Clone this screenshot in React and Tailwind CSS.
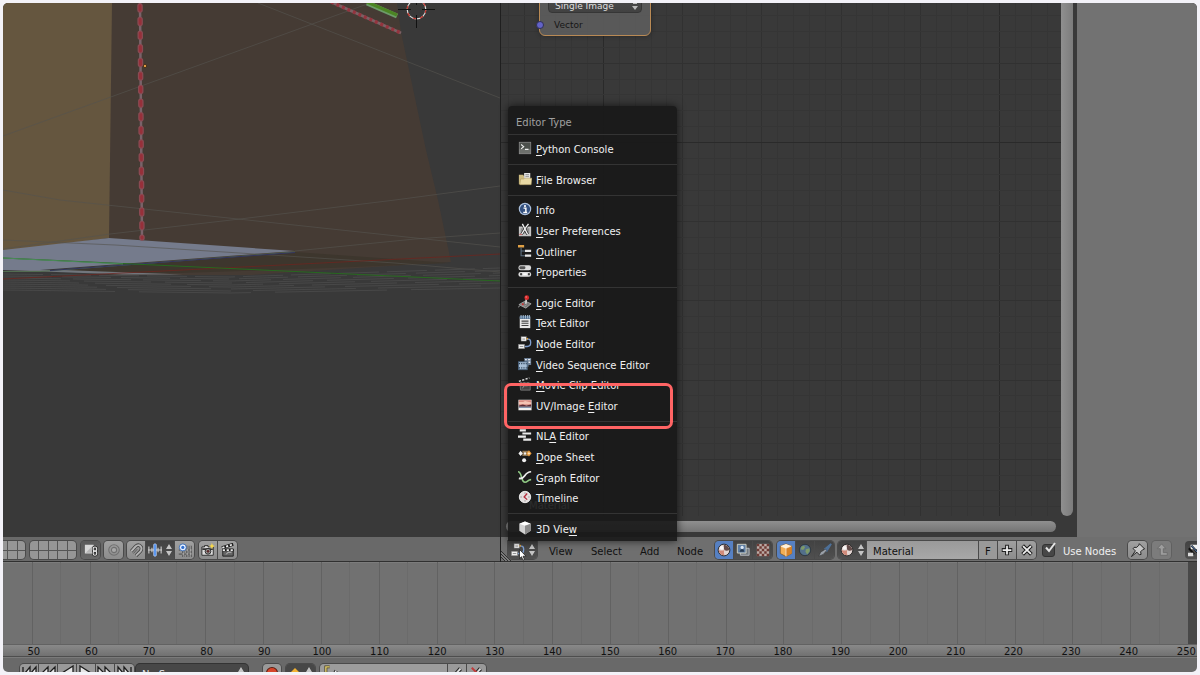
import { useState } from 'react';
import clsx from 'clsx';

const svgProps = { viewBox: '0 0 16 16', className: 'w-[14px] h-[14px] shrink-0', 'aria-hidden': true };

const icons = {
  console: (
    <svg {...svgProps}>
      <rect x="1.5" y="1.5" width="13" height="13" fill="#6d706c" stroke="#8a8a8a" />
      <rect x="2" y="2" width="12" height="7" fill="#4c504c" />
      <path d="M3.5 4l3 2.5-3 2.5M8 9.500h4" fill="none" stroke="#eee" strokeWidth="1.3" />
    </svg>
  ),
  files: (
    <svg {...svgProps}>
      <path d="M1 3h5l1 2v9H1z" fill="#cdbb80" />
      <path d="M7 1h7v8H7z" fill="#e6e6e6" />
      <path d="M8.500 3h4M8.500 5h4" stroke="#888" />
      <path d="M3 8h4l1-1h8l-1 7.500H2z" fill="#e8d9a5" stroke="#a8965c" strokeWidth=".6" />
    </svg>
  ),
  info: (
    <svg {...svgProps}>
      <circle cx="8" cy="8" r="6.500" fill="#33507f" stroke="#a9bedb" strokeWidth="1.300" />
      <circle cx="8" cy="4.700" r="1.200" fill="#fff" />
      <path d="M6.300 7H9v4.500M6 12h4.500" fill="none" stroke="#fff" strokeWidth="1.700" />
    </svg>
  ),
  prefs: (
    <svg {...svgProps}>
      <path d="M1 4h14v11H1z" fill="#c4c4c4" />
      <path d="M3 6h10v6H3z" fill="#8c8c8c" />
      <path d="M5 1l2 4 4 8M12 1L9 5l-5 8" fill="none" stroke="#222" strokeWidth="3" />
      <path d="M5 1l2 4 4 8M12 1L9 5l-5 8" fill="none" stroke="#eee" strokeWidth="1.500" />
      <path d="M1.500 13h3" stroke="#c55" />
    </svg>
  ),
  outliner: (
    <svg {...svgProps}>
      <path d="M0 1h7v3H0z" fill="#e0a045" />
      <path d="M3.500 4v9.500H8M3.500 8H8" fill="none" stroke="#5e7183" strokeWidth="1.200" />
      <path d="M8 6.500h7v2.500H8zM8 12h7v2.500H8z" fill="#e6e6e6" />
    </svg>
  ),
  properties: (
    <svg {...svgProps}>
      <rect x=".5" y="1.500" width="14.500" height="5.500" rx="2.500" fill="#ddd" />
      <rect x="1.500" y="2.700" width="7" height="3.200" rx="1.500" fill="#555" />
      <rect x=".5" y="9" width="14.500" height="5.500" rx="2.500" fill="#ddd" />
      <circle cx="3.500" cy="11.700" r="1.300" fill="#444" />
      <circle cx="12.500" cy="11.700" r="1.300" fill="#444" />
      <path d="M6 11.700h4" stroke="#fff" strokeWidth="2" />
    </svg>
  ),
  logic: (
    <svg {...svgProps}>
      <path d="M1 11l7-4 7 3-6 5z" fill="#777" stroke="#bbb" strokeWidth=".8" />
      <path d="M0 14l4-3 3 2 3-2" fill="none" stroke="#999" />
      <path d="M9.500 4L9 10" stroke="#ddd" strokeWidth="1.800" />
      <circle cx="10" cy="3" r="2.700" fill="#d92b2b" />
      <circle cx="9.300" cy="2.300" r=".8" fill="#f99" />
      <circle cx="5.500" cy="10.500" r="1.200" fill="#c33" />
    </svg>
  ),
  text: (
    <svg {...svgProps}>
      <rect x="2" y="2" width="12" height="13" fill="#e8e8e8" />
      <path d="M2 1h12v3.500H2z" fill="#4b6a8c" />
      <path d="M3.500 0v4M6 0v4M8.500 0v4M11 0v4M13 0v4" stroke="#b6c9dc" />
      <path d="M4 7h8M4 9.500h8M4 12h8" stroke="#444" strokeWidth="1.200" />
    </svg>
  ),
  node: (
    <svg {...svgProps}>
      <path d="M9 3.500h3c2.500 0 2.500 2 2.500 4s0 4.500-4 4.500H8" fill="none" stroke="#7f9fd0" strokeWidth="1.500" />
      <rect x="3.500" y=".8" width="6" height="5" fill="#f0f0f0" stroke="#777" strokeWidth=".5" />
      <path d="M5 3.500h3" stroke="#888" />
      <rect x=".5" y="9.500" width="7" height="5" fill="#f0f0f0" stroke="#777" strokeWidth=".5" />
      <path d="M2 12h4" stroke="#888" />
      <circle cx="10.500" cy="3" r="1" fill="#e3a33c" />
    </svg>
  ),
  sequence: (
    <svg {...svgProps}>
      <path d="M7 1h8v8h-3v2H8z" fill="#6c7f96" />
      <path d="M8 3h2M11.500 3H14M12 6h2" stroke="#e5ebf2" strokeWidth="1.500" />
      <rect x=".5" y="5.500" width="10" height="9" fill="#a7bed6" stroke="#47607c" />
      <path d="M1 7.500h9M1 12.500h9" stroke="#2f4358" strokeWidth="1.400" strokeDasharray="1.300 1.300" />
    </svg>
  ),
  clip: (
    <svg {...svgProps}>
      <path d="M2 7h12v8H3z" fill="#444" stroke="#888" strokeWidth=".8" />
      <path d="M1 5l12-4" stroke="#ddd" strokeWidth="1.600" strokeDasharray="2.500 1.500" />
      <path d="M2 7.500h12" stroke="#ddd" strokeWidth="1.800" strokeDasharray="2.500 1.500" />
      <path d="M5 13l2-3h4" fill="none" stroke="#999" />
    </svg>
  ),
  image: (
    <svg {...svgProps}>
      <rect x=".5" y="2" width="15" height="12" fill="#f0eeee" />
      <rect x="1" y="2.500" width="14" height="6" fill="#d98a80" />
      <path d="M1 4.500h5l2-1 7 1.500V7H1z" fill="#f3c3b4" />
      <path d="M1 8.500l4.500-1 4 1 5.500-1v2.500H1z" fill="#5b2a33" />
      <path d="M1 10h14v1.200H1z" fill="#6a7d9b" />
    </svg>
  ),
  nla: (
    <svg {...svgProps}>
      <path d="M2 1.500h7v2.500H2zM5 5h10v2.500H5zM0 8.500h9v2.500H0zM6 12h9v2.500H6z" fill="#ececec" />
    </svg>
  ),
  dope: (
    <svg {...svgProps}>
      <path d="M5 2h7v6H5z" fill="#8f7550" />
      <path d="M3 2l2.500 3L3 8 .5 5z" fill="#f0f0f0" />
      <path d="M8 3l1.500 2L8 7 6.500 5z" fill="#f0f0f0" />
      <path d="M12.500 1.500L15.500 5l-3 3.500L9.500 5z" fill="#e99a3c" />
      <path d="M12.500 3.500L14 5l-1.500 1.500L11 5z" fill="#fbe0b3" />
      <circle cx="7" cy="12.800" r="2.300" fill="#f0f0f0" />
    </svg>
  ),
  graph: (
    <svg {...svgProps}>
      <path d="M0 2c5 0 3 12 8 12 3 0 3-3 7-3" fill="none" stroke="#8fc984" strokeWidth="1.800" />
      <path d="M1 9.500c8 2 5-7 14-7.500" fill="none" stroke="#eee" strokeWidth="2" />
    </svg>
  ),
  timeline: (
    <svg {...svgProps}>
      <circle cx="8" cy="8" r="6.500" fill="#e4dfdf" stroke="#f6f6f6" />
      <path d="M8 3v1M8 12v1M3 8h1M12 8h1" stroke="#555" />
      <path d="M10.500 4L7 8l3.500 3" fill="none" stroke="#b22a3a" strokeWidth="1.500" />
    </svg>
  ),
  cube: (
    <svg {...svgProps}>
      <path d="M8 .500l6.500 2.500V11L8 15.500 1.500 11V3z" fill="#d2d2d2" />
      <path d="M8 .500l6.500 2.500L8 5.500 1.500 3z" fill="#fff" />
      <path d="M8 5.500L14.500 3V11L8 15.500z" fill="#8b8b8b" />
    </svg>
  ),
  orangeCube: (
    <svg {...svgProps}>
      <path d="M8 1l6.500 2.500V12L8 15.500 1.500 12V3.500z" fill="#f3ae55" stroke="#7a4a10" strokeWidth=".7" />
      <path d="M8 1l6 2.500L8 6 2 3.500z" fill="#fff0d8" />
      <path d="M8 6l6.500-2.500V12L8 15.500z" fill="#d88125" />
      <path d="M8 6v9.500M8 6l6-2.500M8 6L2 3.500" stroke="#fff" strokeWidth=".7" fill="none" />
    </svg>
  ),
  ball: (
    <svg {...svgProps}>
      <circle cx="8" cy="8" r="6.700" fill="#e2d5d2" stroke="#1d1d1d" />
      <path d="M8 2a6 6 0 0 1 6 6c-2 1-4 1-5.500 0C7.500 6 7.500 4 8 2z" fill="#634b49" />
      <path d="M8.500 8C7.500 10 8 12 8.500 14A6 6 0 0 1 2 8c2 .8 4.500.8 6.500 0z" fill="#d08a7a" />
      <circle cx="5.500" cy="5.500" r="2.200" fill="#fff" opacity=".8" />
    </svg>
  ),
  layersImg: (
    <svg {...svgProps}>
      <path d="M5 6h10v8H5z" fill="#737a80" stroke="#bfc4c9" />
      <path d="M1.500 1.500h10v10h-10z" fill="#5f7ea3" stroke="#d8d8c8" />
      <circle cx="7" cy="5" r="1.800" fill="#dbe8f6" />
      <path d="M4 10l1.500-3h3l1 3z" fill="#26394f" />
    </svg>
  ),
  checker: (
    <svg {...svgProps}>
      <rect x="1" y="1" width="14" height="14" fill="#bbaaa4" />
      <path d="M1 2.400h14M1 8h14M1 13.600h14" stroke="#6e3a34" strokeWidth="2.800" strokeDasharray="2.800 2.800" />
      <path d="M3.800 5.200H15M3.800 10.800H15" stroke="#6e3a34" strokeWidth="2.800" strokeDasharray="2.800 2.800" />
    </svg>
  ),
  world: (
    <svg {...svgProps}>
      <circle cx="8" cy="8" r="6.500" fill="#53708a" stroke="#2a333b" />
      <path d="M4 4l3-1 1 2-2 3-3-1zM9 7l4-1 .5 3-3 4-2-3z" fill="#7d9a68" />
    </svg>
  ),
  brush: (
    <svg {...svgProps}>
      <path d="M15 1L8 7l2 2z" fill="#4d7099" stroke="#4d7099" strokeWidth="2" />
      <path d="M8.500 7L3 10.500 1 15l5-2 4-4.500z" fill="#9aa0a8" stroke="#333" strokeWidth=".6" />
    </svg>
  ),
  link: (
    <svg {...svgProps}>
      <path d="M1 2h10v10H1z" fill="#d8d8d8" />
      <path d="M2 11L10 3v8z" fill="#b5b5b5" />
      <rect x="10.500" y="4.500" width="4" height="5" rx="2" fill="none" stroke="#222" strokeWidth="2.600" />
      <rect x="10.500" y="9" width="4" height="5" rx="2" fill="none" stroke="#222" strokeWidth="2.600" />
      <rect x="10.500" y="4.500" width="4" height="5" rx="2" fill="none" stroke="#eee" strokeWidth="1.200" />
      <rect x="10.500" y="9" width="4" height="5" rx="2" fill="none" stroke="#eee" strokeWidth="1.200" />
    </svg>
  ),
  proportional: (
    <svg {...svgProps}>
      <circle cx="8" cy="8" r="6" fill="none" stroke="#707070" strokeWidth="1.200" />
      <circle cx="8" cy="8" r="3" fill="#a8a8a8" stroke="#707070" strokeWidth="1.200" />
    </svg>
  ),
  magnet: (
    <svg {...svgProps}>
      <path d="M2.500 9.500l5-5.500c4-4 9 1 5.500 5.500l-5 5" fill="none" stroke="#444" strokeWidth="4" />
      <path d="M2.500 9.500l5-5.500c4-4 9 1 5.500 5.500l-5 5" fill="none" stroke="#b4b4b4" strokeWidth="2.200" />
      <path d="M5 12l4.500-5" stroke="#555" />
    </svg>
  ),
  increment: (
    <svg {...svgProps}>
      <path d="M0 8h16M1 4v8M4.500 5.500v5M11.500 5.500v5M15 4v8" stroke="#d5d5d5" strokeWidth="1.200" />
      <rect x="6.500" y="1" width="3" height="14" rx="1" fill="#4d8ff0" stroke="#dbe8ff" strokeWidth=".7" />
    </svg>
  ),
  snapGrid: (
    <svg {...svgProps}>
      <path d="M1 8h15M1 12.500h15M6 5v11M10.500 3v13M14.500 3v13" stroke="#3a3a3a" strokeWidth="2.400" />
      <path d="M1 8h15M1 12.500h15M6 5v11M10.500 3v13M14.500 3v13" stroke="#d0d0d0" strokeWidth=".8" />
      <circle cx="5.500" cy="5" r="4" fill="#e8f0ff" stroke="#3168b5" />
      <circle cx="5.500" cy="5" r="1.800" fill="#2f6fd0" />
    </svg>
  ),
  camera: (
    <svg {...svgProps}>
      <path d="M1 4.500h3V3h4v1.500h6V14H1z" fill="#ddd" stroke="#222" />
      <path d="M1.500 6h12v2h-12z" fill="#333" />
      <circle cx="8" cy="9.500" r="3.300" fill="#999" stroke="#222" />
      <circle cx="8" cy="9.500" r="1.600" fill="#5a2a2a" />
      <path d="M12.500 0l1 2.500 2.500 1-2.500 1-1 2.500-1-2.500-2.500-1 2.500-1z" fill="#f7d84a" />
    </svg>
  ),
  clapper: (
    <svg {...svgProps}>
      <path d="M2 7h12v8H2z" fill="#666" stroke="#1d1d1d" />
      <path d="M1 5.500L14 1.500" stroke="#1d1d1d" strokeWidth="3.500" />
      <path d="M1.500 5.500L14 1.500" stroke="#eee" strokeWidth="2" strokeDasharray="2.500 2" />
      <path d="M1.500 8h13" stroke="#1d1d1d" strokeWidth="3" />
      <path d="M2 8h12" stroke="#eee" strokeWidth="2" strokeDasharray="2.500 2" />
      <path d="M6 13l2-2.500h4" fill="none" stroke="#ccc" />
    </svg>
  ),
  plus: (
    <svg {...svgProps}>
      <path d="M8 2v12M2 8h12" stroke="#222" strokeWidth="4.400" />
      <path d="M8 3v10M3 8h10" stroke="#eee" strokeWidth="2" />
    </svg>
  ),
  cross: (
    <svg {...svgProps}>
      <path d="M3 3l10 10M13 3L3 13" stroke="#222" strokeWidth="4.400" />
      <path d="M3.500 3.500l9 9M12.500 3.500l-9 9" stroke="#eee" strokeWidth="2" />
    </svg>
  ),
  pin: (
    <svg {...svgProps}>
      <path d="M9.500 .800l6 6-2 .7-2.500 2.500.5 3-2 .5-2.700-3L.500 15.500l4.500-6.500L2.500 6.500 3.500 5h3L9 2.500z" fill="#c8c8c8" stroke="#222" strokeWidth="1.100" />
    </svg>
  ),
  parent: (
    <svg {...svgProps}>
      <path d="M7.500 1l5 5.500H9.500V11H14v3H6V6.500H2.500z" fill="#9d9d9d" stroke="#6c6c6c" />
    </svg>
  ),
  snapNode: (
    <svg {...svgProps}>
      <path d="M3 2h13v5H3z" fill="#eee" />
      <path d="M1 6l6 7M4 3l8 9 4-5" fill="none" stroke="#111" strokeWidth="2.200" />
      <path d="M4 3l8 9" stroke="#6d9bd8" />
      <path d="M0 11h6v4H0z" fill="#ddd" />
    </svg>
  ),
};

// null is a divider
const editorTypes = [
  null,
  { label: 'Python Console', key: 0, icon: 'console' },
  null,
  { label: 'File Browser', key: 0, icon: 'files' },
  null,
  { label: 'Info', key: 0, icon: 'info' },
  { label: 'User Preferences', key: 0, icon: 'prefs' },
  { label: 'Outliner', key: 0, icon: 'outliner' },
  { label: 'Properties', key: 1, icon: 'properties' },
  null,
  { label: 'Logic Editor', key: 0, icon: 'logic' },
  { label: 'Text Editor', key: 0, icon: 'text' },
  { label: 'Node Editor', key: 0, icon: 'node' },
  { label: 'Video Sequence Editor', key: 0, icon: 'sequence' },
  { label: 'Movie Clip Editor', key: 0, icon: 'clip' },
  { label: 'UV/Image Editor', key: 9, icon: 'image', marked: true },
  null,
  { label: 'NLA Editor', key: 2, icon: 'nla' },
  { label: 'Dope Sheet', key: 0, icon: 'dope' },
  { label: 'Graph Editor', key: 0, icon: 'graph' },
  { label: 'Timeline', key: -1, icon: 'timeline' },
  null,
  { label: '3D View', key: 6, icon: 'cube' },
];

function UpDown() {
  return (
    <svg viewBox="0 0 6 14" className="w-[6px] h-[14px] shrink-0" aria-hidden="true">
      <path d="M3 1l3 5H0zM3 13l3-5H0z" fill="#c4c4c4" />
    </svg>
  );
}

function IconButton({ icon, label, tone = 'light', wide, className }) {
  return (
    <button
      type="button"
      aria-label={label}
      className={clsx(
        'h-[18px] flex items-center justify-center shrink-0',
        wide ? 'w-[29px] gap-1' : 'w-[19px]',
        tone === 'light' && 'bg-linear-to-b from-[#a0a0a0] to-[#8c8c8c]',
        tone === 'dark' && 'bg-linear-to-b from-[#424242] to-[#505050]',
        tone === 'pressed' && 'bg-linear-to-b from-[#5a5a5a] to-[#686868]',
        tone === 'active' && 'bg-[#5680c2]',
        tone === 'faded' && 'bg-[#7c7c7c]',
        className
      )}
    >
      {icons[icon]}
      {wide && <UpDown />}
    </button>
  );
}

function Group({ children, className }) {
  return (
    <div className={clsx('flex shrink-0 rounded-[4px] overflow-hidden ring-1 ring-[#4a4a4a] divide-x divide-[#4a4a4a]', className)}>
      {children}
    </div>
  );
}

function EditorMenu() {
  return (
    <div className="absolute z-20 bottom-full left-0 w-[169px] rounded-t-[4px] bg-[#191919]/92 shadow-[0_0_9px_rgba(0,0,0,0.65)]">
      <div className="h-[23px] pt-[10px] pl-2 leading-[14px] text-[#a0a0a0]">Editor Type</div>
      <ul className="h-[412px] pb-[2px] flex flex-col" role="menu">
        {editorTypes.map((item, i) =>
          item === null ? (
            <li key={i} role="separator" className="h-[10px] shrink-0 flex items-center">
              <div className="w-full h-px bg-[#343434]" />
            </li>
          ) : (
            <li key={i} role="none" className="relative flex-1 flex">
              <button type="button" role="menuitem" className="w-full pl-[10px] pb-[2px] flex items-center gap-1 text-[#f0f0f0]">
                {icons[item.icon]}
                <span className="pt-[4px] whitespace-pre leading-[14px]">
                  {item.label.slice(0, Math.max(item.key, 0))}
                  {item.key >= 0 && <span className="underline underline-offset-2">{item.label[item.key]}</span>}
                  {item.label.slice(item.key + 1)}
                </span>
              </button>
              {item.marked && (
                <div className="absolute z-10 -left-1 right-1 -top-[13px] -bottom-[13px] border-[3px] border-[#ff6464] rounded-[7px] pointer-events-none" />
              )}
            </li>
          )
        )}
      </ul>
    </div>
  );
}

function Viewport() {
  const ground = [];
  for (let i = 0; i < 9; i++) {
    ground.push(
      <path key={i} d={`M3 ${274 + i * 2}L230 ${277 + i * 2}L500 ${268 + i * 2.5}`} strokeDasharray={`${40 + i * 9} ${8 + i * 2}`} />
    );
  }
  return (
    <svg viewBox="3 3 497 534" preserveAspectRatio="xMidYMid slice" className="flex-1 min-h-0 w-full bg-[#393939]" aria-label="3D viewport">
      <path d="M109 3h288l4 29 25 118 12 50 13 62-200 13H109z" fill="#453b34" />
      <path d="M30 271L295 252 451 263 330 268 180 273z" fill="#3d362d" />
      <path d="M3 3h109l-3 235L3 252z" fill="#65563f" />
      <path d="M3 250l106-12 186 13L40 270H3z" fill="#757b8c" />
      <path d="M3 270h60l120 4.500h-60z" fill="#71767d" />
      <g fill="none" stroke="#55544f" strokeOpacity=".8" strokeWidth=".8">
        <path d="M3 136L260 43 370 3M258 3l242 95M3 190l57 10 440 47M3 249l107-15 130-15 155-19 105-14M500 233l-85 6-120 12M3 240l112 5 280 18 105 9" />
      </g>
      <g fill="none" stroke="#484848" strokeWidth="1">{ground}</g>
      <path d="M3 271.500h37L295 252" fill="none" stroke="#536c51" />
      <path d="M50 270.500l245-18" stroke="#34345e" />
      <path d="M3 279l140-7 357-18" fill="none" stroke="#6c2620" strokeWidth=".8" />
      <path d="M3 258l497 23" stroke="#27691f" />
      <path d="M3 258l120 6" stroke="#4b8a5a" />
      <path d="M367 3l30 13" stroke="#6d9b69" strokeWidth="5" />
      <path d="M367 2l30 13" stroke="#4c8424" strokeWidth="3" />
      <path d="M331 2l70 31" stroke="#7c6064" strokeWidth="3" />
      <path d="M331 2l70 31" stroke="#93343e" strokeWidth="3.500" strokeDasharray="3 3" />
      <path d="M140 3l2 236" stroke="#7a636a" strokeWidth="2.500" />
      <path d="M140 6l2 232" stroke="#8a4a52" strokeWidth="5.500" strokeDasharray="4 9.600" strokeLinecap="round" />
      <path d="M140 6l2 232" stroke="#97303a" strokeWidth="3" strokeDasharray="4 9.600" strokeLinecap="round" />
      <circle cx="145" cy="66" r="1.700" fill="#e09a43" stroke="#3a2512" strokeWidth=".8" />
      <circle cx="416.500" cy="9.500" r="9.300" fill="none" stroke="#ddd" strokeWidth="1.200" />
      <circle cx="416.500" cy="9.500" r="9.300" fill="none" stroke="#c3352e" strokeWidth="1.200" strokeDasharray="3.650 3.650" />
      <path d="M398 9.500h13M422 9.500h13M416.500 15v13M416.500 3v2" stroke="#111" />
    </svg>
  );
}

function ViewportHeader() {
  return (
    <header className="h-[25px] pt-1 flex items-start bg-[#696969] border-b border-[#303030]">
      <div className="w-[22px] h-[18px] shrink-0 grid grid-cols-[4px_9px_9px] gap-px bg-[#555] rounded-r-[4px] overflow-hidden ring-1 ring-[#4a4a4a]">
        {Array.from({ length: 6 }, (_, i) => <button key={i} type="button" aria-label={`Layer ${i + 1}`} className="bg-[#969696]" />)}
      </div>
      <div className="ml-[5px] w-[46px] h-[18px] shrink-0 grid grid-cols-5 gap-px bg-[#555] rounded-[4px] overflow-hidden ring-1 ring-[#4a4a4a]">
        {Array.from({ length: 10 }, (_, i) => <button key={i} type="button" aria-label={`Layer ${i + 11}`} className="bg-[#969696]" />)}
      </div>
      <Group className="ml-[5px]"><IconButton icon="link" label="Lock camera and layers" tone="pressed" /></Group>
      <Group className="ml-1"><IconButton icon="proportional" label="Proportional editing" /></Group>
      <Group className="ml-1">
        <IconButton icon="magnet" label="Snap" />
        <IconButton icon="increment" label="Snap element" tone="dark" wide />
        <IconButton icon="snapGrid" label="Snap to grid" />
      </Group>
      <Group className="ml-[5px]">
        <IconButton icon="camera" label="Render" />
        <IconButton icon="clapper" label="Render animation" />
      </Group>
    </header>
  );
}

function lineColor(i) {
  if (i % 25 === 0) return '#2a2a2a';
  return i % 5 === 0 ? '#313131' : '#353535';
}

function GridLines() {
  const step = 15.84;
  const lines = [];
  for (let i = -7; i < 80; i++) {
    const x = Math.round(102 + i * step) + 0.5;
    lines.push(<path key={`v${i}`} d={`M${x} 0V2000`} stroke={lineColor(i)} />);
  }
  for (let i = -9; i < 80; i++) {
    const y = Math.round(139 + i * step) + 0.5;
    lines.push(<path key={`h${i}`} d={`M0 ${y}H2000`} stroke={lineColor(i)} />);
  }
  return <svg className="w-full h-full" aria-hidden="true">{lines}</svg>;
}

function NodeEditor() {
  return (
    <div className="flex-1 min-h-0 flex bg-[#393939]">
      <div className="flex-1 min-w-0 flex flex-col">
        <div className="flex-1 min-h-0 flex">
          <div className="relative flex-1 min-w-0 overflow-hidden">
            <GridLines />
            {/* image texture node, scrolled partly out of view */}
            <div className="absolute left-[38px] -top-[7px] w-[112px] h-[40px] bg-[#5b5b5b]/95 border border-[#b98a55] rounded-b-[6px] shadow-[0_0_5px_rgba(0,0,0,0.3)] text-[9px]">
              <div className="relative mx-2 h-[16px]">
                <select aria-label="Source" className="appearance-none w-full h-[16px] pl-[6px] pt-px leading-[12px] bg-linear-to-b from-[#4a4a4a] to-[#424242] rounded-[4px] border border-[#363636] text-[#dedede]">
                  <option>Single Image</option>
                </select>
                <svg viewBox="0 0 6 8" className="absolute right-1 top-[6px] w-[6px] h-[8px]" aria-hidden="true">
                  <path d="M1 0h4v1H1zM0 3h6L3 7z" fill="#bbb" />
                </svg>
              </div>
              <div className="pl-[14px] pt-[6px] leading-[12px] text-[#161616]">Vector</div>
              <div className="absolute -left-[4px] top-[24px] w-[8px] h-[8px] rounded-full bg-[#6363c7] border border-[#2f2f55]" />
            </div>
            <div className="absolute left-[28px] bottom-[4px] leading-[12px] text-white">Material</div>
          </div>
          <div className="w-[16px] flex justify-start">
            <div className="w-[12px] rounded-b-full bg-linear-to-r from-[#8f8f8f] to-[#7c7c7c]" />
          </div>
        </div>
        <div className="h-[21px] pt-[5px] pl-[5px] pr-[21px]">
          <div className="h-[11px] rounded-full bg-linear-to-b from-[#8f8f8f] to-[#747474]" />
        </div>
      </div>
      <aside className="w-[120px] shrink-0 bg-[#727272]" />
    </div>
  );
}

function NodeHeader() {
  const [useNodes, setUseNodes] = useState(true);
  return (
    <header className="relative h-[25px] pt-1 pl-[7px] flex items-start bg-[#6f6f6f] border-b border-[#303030] text-[#111]">
      <svg viewBox="0 0 10 10" className="absolute left-0 bottom-0 w-[10px] h-[10px]" aria-hidden="true">
        <path d="M0 0l10 10M0 3l7 7M0 6l4 4" stroke="#2f2f2f" />
        <path d="M0 1.500L8.500 10M0 4.500L5.500 10" stroke="#999" strokeWidth=".6" />
      </svg>
      <div className="relative shrink-0">
        <Group className="rounded-t-none"><IconButton icon="node" label="Editor type" tone="dark" wide /></Group>
        <EditorMenu />
        <svg viewBox="0 0 8 12" className="absolute z-30 left-[11px] top-[8px] w-[8px] h-[12px]" aria-hidden="true">
          <path d="M.5 .5v9l2-1.800 1.500 3.500 1.500-.7L4 7.200h3z" fill="#fff" stroke="#111" strokeWidth=".7" />
        </svg>
      </div>
      <nav className="ml-3 flex leading-[22px]">
        <button type="button" className="w-[42px] text-left">View</button>
        <button type="button" className="w-[49px] text-left">Select</button>
        <button type="button" className="w-[37px] text-left">Add</button>
        <button type="button" className="w-[38px] text-left">Node</button>
      </nav>
      <Group>
        <IconButton icon="ball" label="Shader nodes" tone="active" />
        <IconButton icon="layersImg" label="Compositing nodes" tone="dark" />
        <IconButton icon="checker" label="Texture nodes" tone="dark" />
      </Group>
      <Group className="ml-[5px]">
        <IconButton icon="orangeCube" label="Object" tone="active" />
        <IconButton icon="world" label="World" tone="dark" />
        <IconButton icon="brush" label="Line style" tone="dark" />
      </Group>
      <Group className="ml-1">
        <IconButton icon="ball" label="Browse material" tone="dark" wide />
        <input aria-label="Material name" defaultValue="Material" className="w-[112px] h-[18px] pl-[6px] pt-[3px] bg-linear-to-b from-[#9a9a9a] to-[#a8a8a8] text-[#111]" />
        <button type="button" aria-label="Fake user" className="w-[19px] h-[18px] pt-[3px] bg-[#999]">F</button>
        <IconButton icon="plus" label="New material" />
        <IconButton icon="cross" label="Unlink material" />
      </Group>
      <label className="ml-[6px] flex shrink-0 text-[#f0f0f0] leading-[22px]">
        <span className="relative w-[14px] h-[18px]">
          <input
            type="checkbox"
            checked={useNodes}
            onChange={(e) => setUseNodes(e.target.checked)}
            className="appearance-none block mt-[3px] w-[13px] h-[13px] rounded-[3px] bg-[#474747] border border-[#333]"
          />
          {useNodes && (
            <svg viewBox="0 0 14 14" className="absolute left-[1px] top-0 w-[14px] h-[14px] pointer-events-none" aria-hidden="true">
              <path d="M3 6.500l3 3.500 6-8" fill="none" stroke="#e4e4e4" strokeWidth="2" />
            </svg>
          )}
        </span>
        <span className="ml-[7px] whitespace-nowrap">Use Nodes</span>
      </label>
      <Group className="ml-auto mr-[5px]"><IconButton icon="pin" label="Pin" /></Group>
      <Group className="mr-[14px] ring-[#606060]"><IconButton icon="parent" label="Go to parent" tone="faded" /></Group>
      <div className="w-[12px] shrink-0 overflow-hidden rounded-l-[4px]"><IconButton icon="snapNode" label="Snap node" tone="dark" /></div>
    </header>
  );
}

function Timeline() {
  return (
    <section aria-label="Timeline" className="shrink-0 bg-[#717171]">
      <div className="h-[82px] flex pl-[29px] shadow-[inset_0_1px_0_#7c7c7c]">
        {Array.from({ length: 20 }, (_, i) => (
          <div key={i} className="flex-1 flex border-l border-[#626262]">
            <div className="w-1/2 border-r border-[#6b6b6b]" />
          </div>
        ))}
        <div className="w-[9px] bg-[#484848]" />
      </div>
      <div className="h-[13px] border-y border-t-[#626262] border-b-[#4e4e4e] bg-linear-to-b from-[#898989] to-[#717171] overflow-hidden">
        <div className="pl-[2px] -mr-[18px] flex leading-[13px] text-[#111]">
          {Array.from({ length: 21 }, (_, i) => <span key={i} className="flex-1 text-center">{50 + i * 10}</span>)}
        </div>
      </div>
    </section>
  );
}

const playback = [
  ['Jump to start', 'M2 2v12M9 2L4 8l5 6zM15 2l-5 6 5 6z'],
  ['Previous keyframe', 'M8 2L2 8l6 6zM15 2L9 8l6 6z'],
  ['Play reverse', 'M14 1L3 8l11 7z'],
  ['Play', 'M2 1l11 7-11 7z'],
  ['Next keyframe', 'M1 2l6 6-6 6zM8 2l6 6-6 6z'],
  ['Jump to end', 'M1 2l5 6-5 6zM7 2l5 6-5 6zM14 2v12'],
];

function TimelineHeader() {
  return (
    <footer className="h-[15px] pt-[7px] pl-[17px] shrink-0 overflow-hidden flex items-start bg-[#696969] shadow-[inset_0_1px_0_#7a7a7a]">
      <Group>
        {playback.map(([label, d]) => (
          <button key={label} type="button" aria-label={label} className="w-[19px] h-[18px] flex items-center justify-center bg-[#999]">
            <svg viewBox="0 0 16 16" className="w-[16px] h-[16px]" aria-hidden="true">
              <path d={d} fill="#e6e6e6" stroke="#1d1d1d" strokeWidth="1.300" />
            </svg>
          </button>
        ))}
      </Group>
      <div className="relative ml-[2px] shrink-0">
        <select aria-label="Sync mode" className="appearance-none w-[112px] h-[18px] pl-[6px] pt-[2px] rounded-[4px] bg-[#474747] ring-1 ring-[#333] text-[#e6e6e6]">
          <option>No Sync</option>
        </select>
        <svg viewBox="0 0 6 14" className="absolute right-1 top-[2px] w-[6px] h-[14px]" aria-hidden="true">
          <path d="M3 1l3 5H0zM3 13l3-5H0z" fill="#c4c4c4" />
        </svg>
      </div>
      <Group className="ml-[15px]">
        <button type="button" aria-label="Auto keyframe" className="w-[18px] h-[18px] flex items-center justify-center bg-[#999]">
          <span className="w-[10px] h-[10px] rounded-full bg-[#d6452a] ring-1 ring-[#5a1c10]" />
        </button>
      </Group>
      <Group className="ml-[5px]">
        <button type="button" aria-label="Keyframe type" className="w-[29px] h-[18px] flex items-center justify-center gap-[6px] bg-[#474747]">
          <svg viewBox="0 0 10 10" className="w-[10px] h-[10px]" aria-hidden="true"><path d="M5 0l5 5-5 5-5-5z" fill="#f2b233" /></svg>
          <UpDown />
        </button>
      </Group>
      <Group className="ml-[5px]">
        <div className="w-[128px] h-[18px] flex bg-[#9c9c9c]">
          <svg viewBox="0 0 16 16" className="ml-1 mt-px w-[15px] h-[15px]" aria-hidden="true">
            <path d="M2 15V2h4" fill="none" stroke="#40391a" strokeWidth="3" />
            <path d="M2 15V2h4" fill="none" stroke="#e4cf72" strokeWidth="1.500" />
            <path d="M9 13l4-7" stroke="#222" strokeWidth="3.500" />
            <path d="M9 13l4-7" stroke="#eee" strokeWidth="1.500" />
          </svg>
          <input aria-label="Active keying set" className="w-[100px] bg-transparent" />
        </div>
        {['Insert keyframes', 'Delete keyframes'].map((label, i) => (
          <button key={label} type="button" aria-label={label} className="w-[19px] h-[18px] flex items-center justify-center bg-[#999]">
            <svg viewBox="0 0 16 16" className="w-[14px] h-[14px]" aria-hidden="true">
              <path d="M4 12l8-9" stroke="#222" strokeWidth="4.500" />
              <path d="M4 12l8-9" stroke="#ddd" strokeWidth="2.200" />
              {i === 1 && <path d="M2 2l12 12" stroke="#c03a3a" strokeWidth="2.200" />}
            </svg>
          </button>
        ))}
      </Group>
    </footer>
  );
}

export default function App() {
  return (
    <div className="h-screen p-[3px] bg-[#f3f2f8] text-[10px] font-['DejaVu_Sans',sans-serif]">
      <main className="h-full rounded-[5px] overflow-hidden flex flex-col">
        <div className="flex-1 min-h-0 grid grid-cols-[497fr_697fr]">
          <section className="min-w-0 min-h-0 flex flex-col">
            <Viewport />
            <ViewportHeader />
          </section>
          <section className="min-w-0 min-h-0 flex flex-col border-l border-[#1f1f1f]">
            <NodeEditor />
            <NodeHeader />
          </section>
        </div>
        <Timeline />
        <TimelineHeader />
      </main>
    </div>
  );
}
